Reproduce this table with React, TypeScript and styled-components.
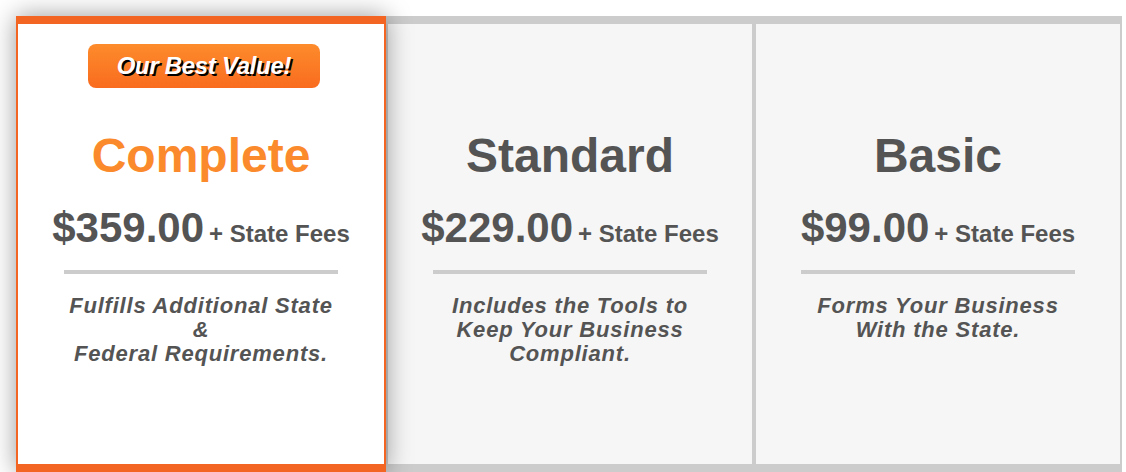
import React from 'react';
import styled, { createGlobalStyle, css } from 'styled-components';

const GlobalStyle = createGlobalStyle`
  html, body {
    margin: 0;
    padding: 0;
    background: #ffffff;
    overflow: hidden;
  }
  body {
    font-family: 'Liberation Sans', Arial, sans-serif;
  }
`;

interface Plan {
  name: string;
  price: string;
  description: string[];
  featured?: boolean;
}

const plans: Plan[] = [
  {
    name: 'Complete',
    price: '$359.00',
    description: ['Fulfills Additional State', '&', 'Federal Requirements.'],
    featured: true,
  },
  {
    name: 'Standard',
    price: '$229.00',
    description: ['Includes the Tools to', 'Keep Your Business', 'Compliant.'],
  },
  {
    name: 'Basic',
    price: '$99.00',
    description: ['Forms Your Business', 'With the State.'],
  },
];

const PlansTable = styled.div`
  display: flex;
  width: 1106px;
  height: 456px;
  margin: 16px 0 0 16px;
  padding-right: 2px;
  box-sizing: border-box;
  background: #cccccc;
`;

const PlanCell = styled.div<{ $featured?: boolean }>`
  display: flex;
  flex-direction: column;
  align-items: center;
  box-sizing: border-box;
  width: 364px;
  margin: 8px 0 8px 4px;
  padding-top: 104px;
  background: #f6f6f6;
  color: #545454;

  &:nth-child(2) {
    margin-left: 2px;
  }

  ${({ $featured }) =>
    $featured &&
    css`
      position: relative;
      z-index: 1;
      width: 370px;
      margin: 0;
      padding-top: 20px;
      background: #ffffff;
      border: solid #f26522;
      border-width: 8px 2px;
      box-shadow: 0 0 24px rgba(0, 0, 0, 0.4);
    `}
`;

const Badge = styled.div`
  width: 232px;
  height: 44px;
  margin: 0 0 40px 6px;
  border-radius: 8px;
  background: linear-gradient(#fd8b2b, #f96c1f);
  color: #ffffff;
  font-size: 24px;
  font-weight: bold;
  font-style: italic;
  line-height: 44px;
  letter-spacing: -0.3px;
  text-align: center;
  text-shadow: 2px 2px 0 #000000;
`;

const PlanName = styled.div<{ $featured?: boolean }>`
  font-size: 48px;
  font-weight: bold;
  line-height: 56px;
  color: ${({ $featured }) => ($featured ? '#fb8a2c' : '#545454')};
`;

const PriceRow = styled.div`
  margin-top: 20px;
  font-weight: bold;
  line-height: 48px;
  white-space: nowrap;
`;

const Amount = styled.span`
  font-size: 42px;
`;

const Fees = styled.span`
  font-size: 24px;
  margin-left: 5px;
`;

const Divider = styled.div`
  width: 274px;
  height: 4px;
  margin-top: 9px;
  background: #cccccc;
`;

const Description = styled.div`
  margin-top: 20px;
  font-size: 22px;
  font-weight: bold;
  font-style: italic;
  line-height: 24px;
  letter-spacing: 0.8px;
  text-align: center;
`;

export default function App() {
  return (
    <>
      <GlobalStyle />
      <PlansTable>
        {plans.map((plan) => (
          <PlanCell key={plan.name} $featured={plan.featured}>
            {plan.featured && <Badge>Our Best Value!</Badge>}
            <PlanName $featured={plan.featured}>{plan.name}</PlanName>
            <PriceRow>
              <Amount>{plan.price}</Amount>
              <Fees>+ State Fees</Fees>
            </PriceRow>
            <Divider />
            <Description>
              {plan.description.map((line) => (
                <div key={line}>{line}</div>
              ))}
            </Description>
          </PlanCell>
        ))}
      </PlansTable>
    </>
  );
}
